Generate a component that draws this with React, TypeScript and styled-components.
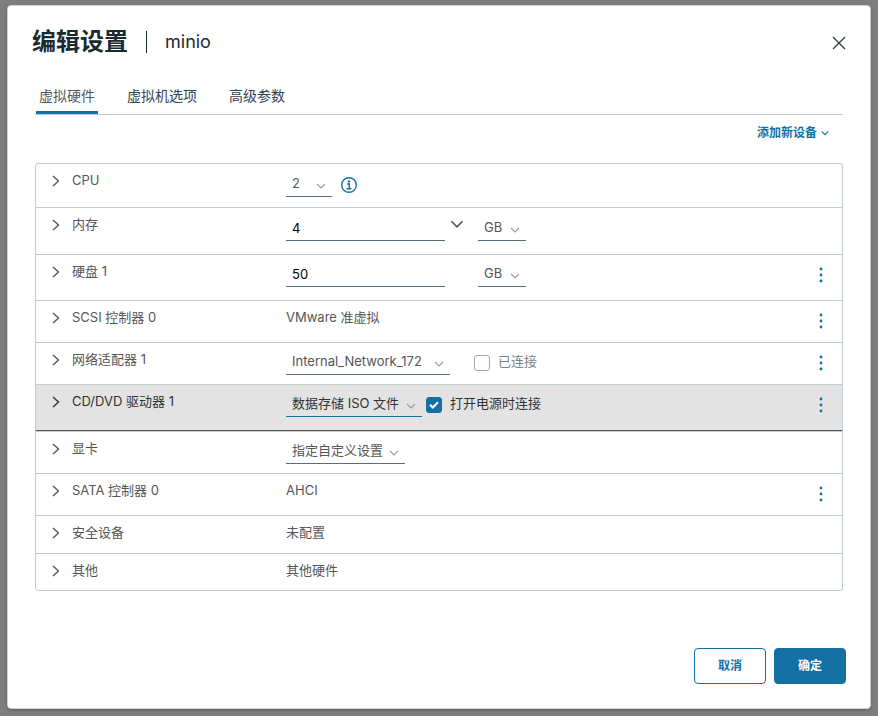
import React, { useState } from "react";
import styled, { createGlobalStyle, css } from "styled-components";

const blue = "#146fa5";
const line = "#c1cdd4";

const GlobalStyle = createGlobalStyle`
  *, *::before, *::after { box-sizing: border-box; }
  body {
    margin: 0;
    background: #7d7e7d;
    color: #565656;
    font-family: Inter, "Noto Sans CJK SC", sans-serif;
    font-size: 13px;
    line-height: 20px;
  }
  button, input, select { font: inherit; color: inherit; }
  button { cursor: pointer; }
`;

const Backdrop = styled.div`
  display: flex;
  min-height: 100vh;
  padding: 5px 7px 7px;
`;

const Dialog = styled.section`
  display: flex;
  flex: 1;
  flex-direction: column;
  min-width: 0;
  padding: 0 24px 24px;
  background: #fff;
  border: 1px solid #cdd6da;
  border-radius: 4px;
  box-shadow: 0 1px 3px rgba(0, 0, 0, 0.3);
`;

const Header = styled.header`
  display: flex;
  align-items: center;
  height: 72px;
  color: #1b2a32;
`;

const Title = styled.h1`
  margin: 0;
  font-size: 24px;
  font-weight: 600;
  line-height: 36px;
`;

const Subtitle = styled.span`
  font-size: 18px;
  line-height: 24px;
`;

const Divider = styled.span`
  width: 1px;
  height: 22px;
  margin: 0 18px;
  background: #1b2a32;
`;

const IconButton = styled.button`
  display: flex;
  align-items: center;
  justify-content: center;
  width: 16px;
  height: 24px;
  padding: 0;
  border: 0;
  background: none;
`;

const CloseButton = styled(IconButton)`
  width: 14px;
  margin: 2px 0 0 auto;
  color: #313b43;
`;

const Body = styled.div`
  padding: 0 3px;
`;

const Tabs = styled.nav`
  display: flex;
  gap: 26px;
  height: 37px;
  padding-left: 1px;
  border-bottom: 1px solid ${line};
`;

const Tab = styled.button<{ $active: boolean }>`
  height: 36px;
  padding: 2px 3px 0;
  border: 0;
  border-bottom: 3px solid ${(p) => (p.$active ? blue : "transparent")};
  background: none;
  color: ${(p) => (p.$active ? "#565656" : "#314351")};
  font-size: 14px;
`;

const Actions = styled.div`
  display: flex;
  justify-content: flex-end;
  height: 48px;
  padding: 6px 14px 0;
`;

const AddDevice = styled.button`
  display: flex;
  align-items: center;
  gap: 4px;
  height: 24px;
  padding: 0;
  border: 0;
  background: none;
  color: ${blue};
  font-size: 12px;
  font-weight: 600;
`;

const DeviceList = styled.ul`
  margin: 0;
  padding: 0;
  border: 1px solid ${line};
  border-radius: 3px;
  list-style: none;
`;

const Row = styled.li<{ $height: number; $active?: boolean }>`
  box-sizing: content-box;
  display: grid;
  grid-template-columns: 236px 1fr 16px;
  align-items: start;
  min-height: ${(p) => p.$height}px;
  padding: 0 13px 0 14px;

  & + & { border-top: 1px solid ${line}; }

  ${(p) =>
    p.$active &&
    css`
      background: #e3e3e3;
      color: #333;
      box-shadow: inset 0 -1px #565656;
    `}
`;

const Expander = styled.button`
  display: flex;
  align-items: center;
  gap: 10px;
  padding: 0;
  margin-top: 6px;
  border: 0;
  background: none;
  text-align: left;

  & > svg { margin-top: 2px; }
`;

const Value = styled.div<{ $top: number }>`
  display: flex;
  align-items: flex-start;
  padding-top: ${(p) => p.$top}px;
`;

const MenuButton = styled(IconButton)`
  margin-top: 8px;
  color: ${blue};
`;

const SelectBox = styled.span<{ $width: number }>`
  display: grid;
  align-items: center;
  width: ${(p) => p.$width}px;

  & > * { grid-area: 1 / 1; }
  & > svg {
    justify-self: end;
    margin: 2px 6px 0 0;
    color: #999;
    pointer-events: none;
  }
`;

const SelectInput = styled.select<{ $focused?: boolean }>`
  appearance: none;
  width: 100%;
  height: 25px;
  padding: 0 0 2px 6px;
  border: 0;
  border-bottom: 1px solid ${(p) => (p.$focused ? blue : "#596c77")};
  border-radius: 0;
  background: none;
`;

const TextInput = styled.input`
  width: 159px;
  height: 25px;
  padding: 0 6px 1px;
  border: 0;
  border-bottom: 1px solid #596c77;
  border-radius: 0;
  background: none;
  color: #000;
`;

const UnitSlot = styled.span`
  display: flex;
  justify-content: center;
  width: 33px;
  padding-right: 9px;
`;

const HintButton = styled(IconButton)`
  height: 16px;
`;

const CheckField = styled.label<{ $gap: number; $muted?: boolean }>`
  display: grid;
  grid-template-columns: 16px auto;
  align-items: center;
  column-gap: 8px;
  height: 22px;
  margin-left: ${(p) => p.$gap}px;
  color: ${(p) => (p.$muted ? "#73828b" : "inherit")};
`;

const Mark = styled.span`
  display: grid;
  width: 16px;
  height: 16px;
  margin-top: 4px;
  & > * { grid-area: 1 / 1; }
  & > svg { pointer-events: none; }
`;

const Check = styled.input`
  appearance: none;
  width: 16px;
  height: 16px;
  margin: 0;
  border: 1px solid #9aa7ae;
  border-radius: 3px;
  background: #fff;
  &:checked { background: ${blue}; border-color: ${blue}; }
`;

const InfoButton = styled(IconButton)`
  margin: 1px 0 0 9px;
  color: ${blue};
`;

const Footer = styled.footer`
  display: flex;
  justify-content: flex-end;
  gap: 8px;
  margin-top: auto;
`;

const Button = styled.button<{ $primary?: boolean }>`
  min-width: 72px;
  height: 36px;
  padding: 0 12px;
  border: 1px solid ${blue};
  border-radius: 4px;
  background: ${(p) => (p.$primary ? blue : "#fff")};
  color: ${(p) => (p.$primary ? "#fff" : blue)};
  font-size: 12px;
  font-weight: 600;
`;

const ChevronDown = ({ size = 10, weight = 1.1 }: { size?: number; weight?: number }) => (
  <svg width={size} height={size} viewBox="0 0 10 10" fill="none" stroke="currentColor" strokeWidth={weight} aria-hidden="true">
    <path d="M1 3l4 4 4-4" />
  </svg>
);

const ChevronRight = () => (
  <svg width="12" height="12" viewBox="0 0 12 12" fill="none" stroke="currentColor" strokeWidth="1.4" aria-hidden="true">
    <path d="M3 1l5.5 5L3 11" />
  </svg>
);

const CloseIcon = () => (
  <svg width="14" height="14" viewBox="0 0 14 14" fill="none" stroke="currentColor" strokeWidth="1.3" aria-hidden="true">
    <path d="M1 1l12 12M13 1L1 13" />
  </svg>
);

const DotsIcon = () => (
  <svg width="16" height="16" viewBox="0 0 16 16" fill="currentColor" aria-hidden="true">
    <circle cx="8" cy="2" r="1.4" />
    <circle cx="8" cy="8" r="1.4" />
    <circle cx="8" cy="14" r="1.4" />
  </svg>
);

const InfoIcon = () => (
  <svg width="16" height="16" viewBox="0 0 16 16" fill="none" stroke="currentColor" aria-hidden="true">
    <circle cx="8" cy="8" r="7.3" strokeWidth="1.4" />
    <circle cx="8" cy="4.4" r="1.2" fill="currentColor" stroke="none" />
    <path d="M6 7h2.3v4.7M5.5 11.7h5" strokeWidth="1.5" />
  </svg>
);

const CheckIcon = () => (
  <svg width="16" height="16" viewBox="0 0 16 16" fill="none" stroke="#fff" strokeWidth="2.2" aria-hidden="true">
    <path d="M4 7.8l2.8 2.7L12 5.3" />
  </svg>
);

type PickerProps = { label: string; value: string; width: number; focused?: boolean };

const Picker = ({ label, value, width, focused }: PickerProps) => (
  <SelectBox $width={width}>
    <SelectInput aria-label={label} $focused={focused}>
      <option>{value}</option>
    </SelectInput>
    <ChevronDown />
  </SelectBox>
);

type CheckboxProps = { label: string; gap: number; initial?: boolean; disabled?: boolean };

const Checkbox = ({ label, gap, initial = false, disabled }: CheckboxProps) => {
  const [checked, setChecked] = useState(initial);
  return (
    <CheckField $gap={gap} $muted={disabled}>
      <Mark>
        <Check type="checkbox" checked={checked} disabled={disabled} onChange={() => setChecked(!checked)} />
        {checked && <CheckIcon />}
      </Mark>
      {label}
    </CheckField>
  );
};

type DeviceProps = {
  name: string;
  height: number;
  top?: number;
  menu?: boolean;
  active?: boolean;
  children: React.ReactNode;
};

const Device = ({ name, height, top = 7, menu, active, children }: DeviceProps) => (
  <Row $height={height} $active={active}>
    <Expander aria-expanded="false">
      <ChevronRight />
      {name}
    </Expander>
    <Value $top={top}>{children}</Value>
    {menu && (
      <MenuButton aria-label={`${name} 操作`}>
        <DotsIcon />
      </MenuButton>
    )}
  </Row>
);

const tabs = ["虚拟硬件", "虚拟机选项", "高级参数"];

export default function App() {
  const [tab, setTab] = useState(0);
  return (
    <>
      <GlobalStyle />
      <Backdrop>
        <Dialog role="dialog" aria-labelledby="dialog-title">
          <Header>
            <Title id="dialog-title">编辑设置</Title>
            <Divider />
            <Subtitle>minio</Subtitle>
            <CloseButton aria-label="关闭">
              <CloseIcon />
            </CloseButton>
          </Header>
          <Body>
            <Tabs>
              {tabs.map((name, i) => (
                <Tab key={name} $active={i === tab} onClick={() => setTab(i)}>
                  {name}
                </Tab>
              ))}
            </Tabs>
            <Actions>
              <AddDevice>
                添加新设备
                <ChevronDown size={8} weight={1.4} />
              </AddDevice>
            </Actions>
            <DeviceList>
              <Device name="CPU" height={43} top={8}>
                <Picker label="CPU" value="2" width={46} />
                <InfoButton aria-label="CPU 信息">
                  <InfoIcon />
                </InfoButton>
              </Device>
              <Device name="内存" height={46} top={8}>
                <TextInput aria-label="内存" defaultValue="4" />
                <UnitSlot>
                  <HintButton aria-label="内存建议">
                    <ChevronDown size={14} weight={1.1} />
                  </HintButton>
                </UnitSlot>
                <Picker label="内存单位" value="GB" width={48} />
              </Device>
              <Device name="硬盘 1" height={45} menu>
                <TextInput aria-label="硬盘 1" defaultValue="50" />
                <UnitSlot />
                <Picker label="硬盘单位" value="GB" width={48} />
              </Device>
              <Device name="SCSI 控制器 0" height={41} top={6} menu>
                VMware 准虚拟
              </Device>
              <Device name="网络适配器 1" height={41} menu>
                <Picker label="网络适配器 1" value="Internal_Network_172" width={164} />
                <Checkbox label="已连接" gap={24} disabled />
              </Device>
              <Device name="CD/DVD 驱动器 1" height={46} menu active>
                <Picker label="CD/DVD 驱动器 1" value="数据存储 ISO 文件" width={136} focused />
                <Checkbox label="打开电源时连接" gap={4} initial />
              </Device>
              <Device name="显卡" height={41}>
                <Picker label="显卡" value="指定自定义设置" width={119} />
              </Device>
              <Device name="SATA 控制器 0" height={41} top={6} menu>
                AHCI
              </Device>
              <Device name="安全设备" height={37} top={6}>
                未配置
              </Device>
              <Device name="其他" height={36} top={6}>
                其他硬件
              </Device>
            </DeviceList>
          </Body>
          <Footer>
            <Button>取消</Button>
            <Button $primary>确定</Button>
          </Footer>
        </Dialog>
      </Backdrop>
    </>
  );
}
